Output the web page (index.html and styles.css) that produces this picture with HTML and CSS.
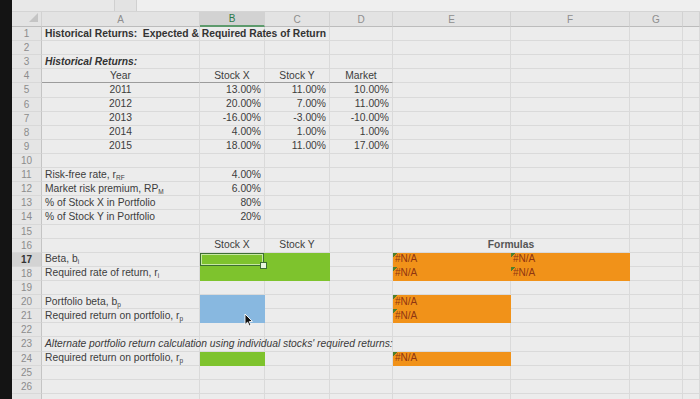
FILE: index.html
```html
<!DOCTYPE html>
<html>
<head>
<meta charset="utf-8">
<link rel="stylesheet" href="styles.css">
</head>
<body>
<div class="screen">
  <div class="bezel"></div>
  <div class="app">
    <div class="formula-bar">
      <span class="name-box"></span>
      <span class="fx-box"></span>
      <span class="formula-input"></span>
    </div>
    <table class="sheet">
      <colgroup>
        <col class="w-rh"><col class="w-a"><col class="w-b"><col class="w-c"><col class="w-d"><col class="w-e"><col class="w-f"><col class="w-g"><col class="w-h">
      </colgroup>
      <thead>
        <tr class="hdr">
          <th class="corner"><span class="tri"></span></th>
          <th>A</th><th class="col-sel">B</th><th>C</th><th>D</th><th>E</th><th>F</th><th>G</th><th></th>
        </tr>
      </thead>
      <tbody>
        <tr><th class="rh">1</th><td class="title">Historical Returns:&nbsp; Expected &amp; Required Rates of Return</td><td></td><td></td><td></td><td></td><td></td><td></td><td></td></tr>
        <tr><th class="rh">2</th><td></td><td></td><td></td><td></td><td></td><td></td><td></td><td></td></tr>
        <tr><th class="rh">3</th><td class="subtitle">Historical Returns:</td><td></td><td></td><td></td><td></td><td></td><td></td><td></td></tr>
        <tr class="rule"><th class="rh">4</th><td class="ctr">Year</td><td class="ctr">Stock X</td><td class="ctr">Stock Y</td><td class="ctr">Market</td><td></td><td></td><td></td><td></td></tr>
        <tr><th class="rh">5</th><td class="ctr">2011</td><td class="num">13.00%</td><td class="num">11.00%</td><td class="num">10.00%</td><td></td><td></td><td></td><td></td></tr>
        <tr><th class="rh">6</th><td class="ctr">2012</td><td class="num">20.00%</td><td class="num">7.00%</td><td class="num">11.00%</td><td></td><td></td><td></td><td></td></tr>
        <tr><th class="rh">7</th><td class="ctr">2013</td><td class="num">-16.00%</td><td class="num">-3.00%</td><td class="num">-10.00%</td><td></td><td></td><td></td><td></td></tr>
        <tr><th class="rh">8</th><td class="ctr">2014</td><td class="num">4.00%</td><td class="num">1.00%</td><td class="num">1.00%</td><td></td><td></td><td></td><td></td></tr>
        <tr><th class="rh">9</th><td class="ctr">2015</td><td class="num">18.00%</td><td class="num">11.00%</td><td class="num">17.00%</td><td></td><td></td><td></td><td></td></tr>
        <tr><th class="rh">10</th><td></td><td></td><td></td><td></td><td></td><td></td><td></td><td></td></tr>
        <tr><th class="rh">11</th><td>Risk-free rate, r<sub>RF</sub></td><td class="num">4.00%</td><td></td><td></td><td></td><td></td><td></td><td></td></tr>
        <tr><th class="rh">12</th><td>Market risk premium, RP<sub>M</sub></td><td class="num">6.00%</td><td></td><td></td><td></td><td></td><td></td><td></td></tr>
        <tr><th class="rh">13</th><td>% of Stock X in Portfolio</td><td class="num">80%</td><td></td><td></td><td></td><td></td><td></td><td></td></tr>
        <tr><th class="rh">14</th><td>% of Stock Y in Portfolio</td><td class="num">20%</td><td></td><td></td><td></td><td></td><td></td><td></td></tr>
        <tr><th class="rh">15</th><td></td><td></td><td></td><td></td><td></td><td></td><td></td><td></td></tr>
        <tr><th class="rh">16</th><td></td><td class="ctr">Stock X</td><td class="ctr">Stock Y</td><td></td><td class="ctr bold" colspan="2">Formulas</td><td></td><td></td></tr>
        <tr><th class="rh row-sel">17</th><td>Beta, b<sub>i</sub></td><td class="green cell-sel"></td><td class="green"></td><td></td><td class="orange err">#N/A</td><td class="orange err">#N/A</td><td></td><td></td></tr>
        <tr><th class="rh">18</th><td>Required rate of return, r<sub>i</sub></td><td class="green"></td><td class="green"></td><td></td><td class="orange err">#N/A</td><td class="orange err">#N/A</td><td></td><td></td></tr>
        <tr><th class="rh">19</th><td></td><td></td><td></td><td></td><td></td><td></td><td></td><td></td></tr>
        <tr><th class="rh">20</th><td>Portfolio beta, b<sub>p</sub></td><td class="blue"></td><td></td><td></td><td class="orange err">#N/A</td><td></td><td></td><td></td></tr>
        <tr><th class="rh">21</th><td>Required return on portfolio, r<sub>p</sub></td><td class="blue has-cursor"><svg class="cursor" width="9" height="14" viewBox="0 0 9 14"><path d="M1 1 L1 11.5 L3.6 9.2 L5.4 13 L7 12.3 L5.3 8.6 L8.4 8.4 Z" fill="#111" stroke="#fff" stroke-width="0.9" stroke-linejoin="round"/></svg></td><td></td><td></td><td class="orange err">#N/A</td><td></td><td></td><td></td></tr>
        <tr><th class="rh">22</th><td></td><td></td><td></td><td></td><td></td><td></td><td></td><td></td></tr>
        <tr><th class="rh">23</th><td class="note">Alternate portfolio return calculation using individual stocks' required returns:</td><td></td><td></td><td></td><td></td><td></td><td></td><td></td></tr>
        <tr><th class="rh">24</th><td>Required return on portfolio, r<sub>p</sub></td><td class="green"></td><td></td><td></td><td class="orange err">#N/A</td><td></td><td></td><td></td></tr>
        <tr><th class="rh">25</th><td></td><td></td><td></td><td></td><td></td><td></td><td></td><td></td></tr>
        <tr><th class="rh">26</th><td></td><td></td><td></td><td></td><td></td><td></td><td></td><td></td></tr>
        <tr><th class="rh"></th><td></td><td></td><td></td><td></td><td></td><td></td><td></td><td></td></tr>
      </tbody>
    </table>
  </div>
</div>
</body>
</html>
```

FILE: styles.css
```css
* { box-sizing: border-box; }
html, body { margin: 0; padding: 0; background: #121212; }
body {
  width: 700px;
  height: 399px;
  overflow: hidden;
  font-family: "Liberation Sans", Arial, sans-serif;
}
.screen { display: flex; height: 399px; }
.bezel { width: 12px; flex: none; background: #141414; }
.app {
  flex: 1;
  background: #ececec;
  display: flex;
  flex-direction: column;
  overflow: hidden;
}
.formula-bar {
  height: 12px;
  flex: none;
  display: flex;
  background: #e8e8e8;
  border-bottom: 1px solid #d4d4d4;
}
.name-box { width: 103px; border-right: 1px solid #d0d0d0; }
.fx-box { width: 22px; border-right: 1px solid #d0d0d0; background: #e3e3e3; }
.formula-input { flex: 1; background: #efefef; }

.sheet {
  border-collapse: separate;
  border-spacing: 0;
  table-layout: fixed;
  width: 688px;
  font-size: 10.3px;
  color: #3c3c3c;
}
.w-rh { width: 30px; }
.w-a { width: 158px; }
.w-b { width: 65px; }
.w-c { width: 65px; }
.w-d { width: 63px; }
.w-e { width: 118px; }
.w-f { width: 119px; }
.w-g { width: 53px; }
.w-h { width: 17px; }

.hdr { height: 15px; }
.hdr th {
  background: #e3e3e3;
  color: #8e8e8e;
  font-weight: normal;
  font-size: 10px;
  text-align: center;
  padding: 0;
  border-right: 1px solid #d2d2d2;
  border-bottom: 1px solid #bcbcbc;
}
.hdr th.corner { text-align: right; vertical-align: bottom; padding: 0 3px 2px 0; }
.tri {
  display: inline-block;
  width: 0;
  height: 0;
  border-left: 9px solid transparent;
  border-bottom: 9px solid #c4c4c4;
}
.hdr th.col-sel {
  background: #d2d2d2;
  color: #2b7a4b;
  border-bottom: 2px solid #5d9a6c;
}

tbody tr { height: 14.12px; }
.rh {
  background: #e5e5e5;
  color: #8c8c8c;
  font-weight: normal;
  font-size: 10px;
  text-align: center;
  padding: 0;
  border-right: 1px solid #c4c4c4;
  border-bottom: 1px solid #d8d8d8;
}
.rh.row-sel {
  background: #d3d3d3;
  color: #333;
  font-weight: bold;
}
td {
  padding: 0 3px;
  line-height: 12px;
  white-space: nowrap;
  overflow: visible;
  border-right: 1px solid #dadada;
  border-bottom: 1px solid #dadada;
  vertical-align: middle;
}
sub { font-size: 6.5px; vertical-align: -2px; line-height: 0; }

.title { font-weight: bold; color: #333; }
.subtitle { font-weight: bold; font-style: italic; color: #333; }
.note { font-style: italic; color: #3a3a3a; }
.ctr { text-align: center; }
.num { text-align: right; }
.bold { font-weight: bold; color: #555; }
.rule td:nth-child(-n+5) { border-bottom-color: #9c9c9c; }

.green { background: #7ec32d; border-color: #7ec32d; }
.blue { background: #88b8e0; border-color: #88b8e0; }
.orange { background: #f19219; border-color: #f19219; }
.err {
  color: #8f3612;
  font-size: 10px;
  padding-left: 2px;
  background: linear-gradient(135deg, #4f7f2c 0 3.5px, transparent 3.5px) no-repeat, #f19219;
}
.cell-sel {
  position: relative;
  box-shadow: inset 0 0 0 1px #3c6e33, inset 0 0 0 2px #c7e8a2;
}
.cell-sel::after {
  content: "";
  position: absolute;
  right: -3px;
  bottom: -3px;
  width: 5px;
  height: 5px;
  background: #e9f5df;
  border: 1px solid #3c6e33;
}
.has-cursor { position: relative; }
.cursor { position: absolute; left: 44px; top: 4px; }
```
